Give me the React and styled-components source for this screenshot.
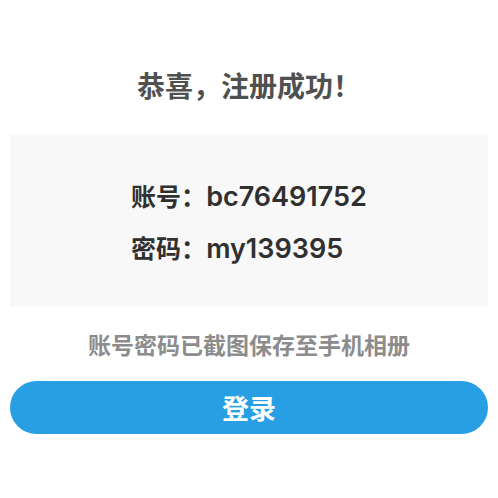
import React from "react";
import styled, { createGlobalStyle } from "styled-components";

const GlobalStyle = createGlobalStyle`
  * { box-sizing: border-box; }
  body {
    margin: 0;
    background: #ffffff;
    font-family: "Noto Sans CJK SC", sans-serif;
  }
`;

const Page = styled.main`
  display: flex;
  flex-direction: column;
  padding: 65px 10px;
`;

const Title = styled.h1`
  margin: 0 0 30px;
  font-size: 28px;
  line-height: 40px;
  font-weight: 700;
  color: #505050;
  text-align: center;
`;

const Panel = styled.section`
  display: flex;
  justify-content: center;
  padding: 34px 16px;
  background: #f8f8f8;
`;

const Credentials = styled.dl`
  display: grid;
  grid-template-columns: auto auto;
  align-items: baseline;
  margin: 0;
  line-height: 52px;
  color: #303030;
`;

const Label = styled.dt`
  font-size: 25px;
  font-weight: 700;
`;

const Value = styled.dd`
  margin: 0;
  font-family: Inter, "Noto Sans CJK SC", sans-serif;
  font-size: 27px;
  line-height: 48px;
  font-weight: 600;
`;

const Note = styled.p`
  margin: 21px 0;
  font-size: 23px;
  line-height: 32px;
  font-weight: 700;
  color: #8c8c8c;
  text-align: center;
`;

const LoginButton = styled.button`
  width: 100%;
  padding: 6px 24px;
  border: 0;
  border-radius: 27px;
  background: #289fe5;
  color: #ffffff;
  font-family: inherit;
  font-size: 27px;
  line-height: 41px;
  font-weight: 700;
  cursor: pointer;
`;

export default function App() {
  return (
    <>
      <GlobalStyle />
      <Page lang="zh-CN">
        <Title>恭喜，注册成功！</Title>
        <Panel>
          <Credentials>
            <Label>账号：</Label>
            <Value>bc76491752</Value>
            <Label>密码：</Label>
            <Value>my139395</Value>
          </Credentials>
        </Panel>
        <Note>账号密码已截图保存至手机相册</Note>
        <LoginButton type="button">登录</LoginButton>
      </Page>
    </>
  );
}
